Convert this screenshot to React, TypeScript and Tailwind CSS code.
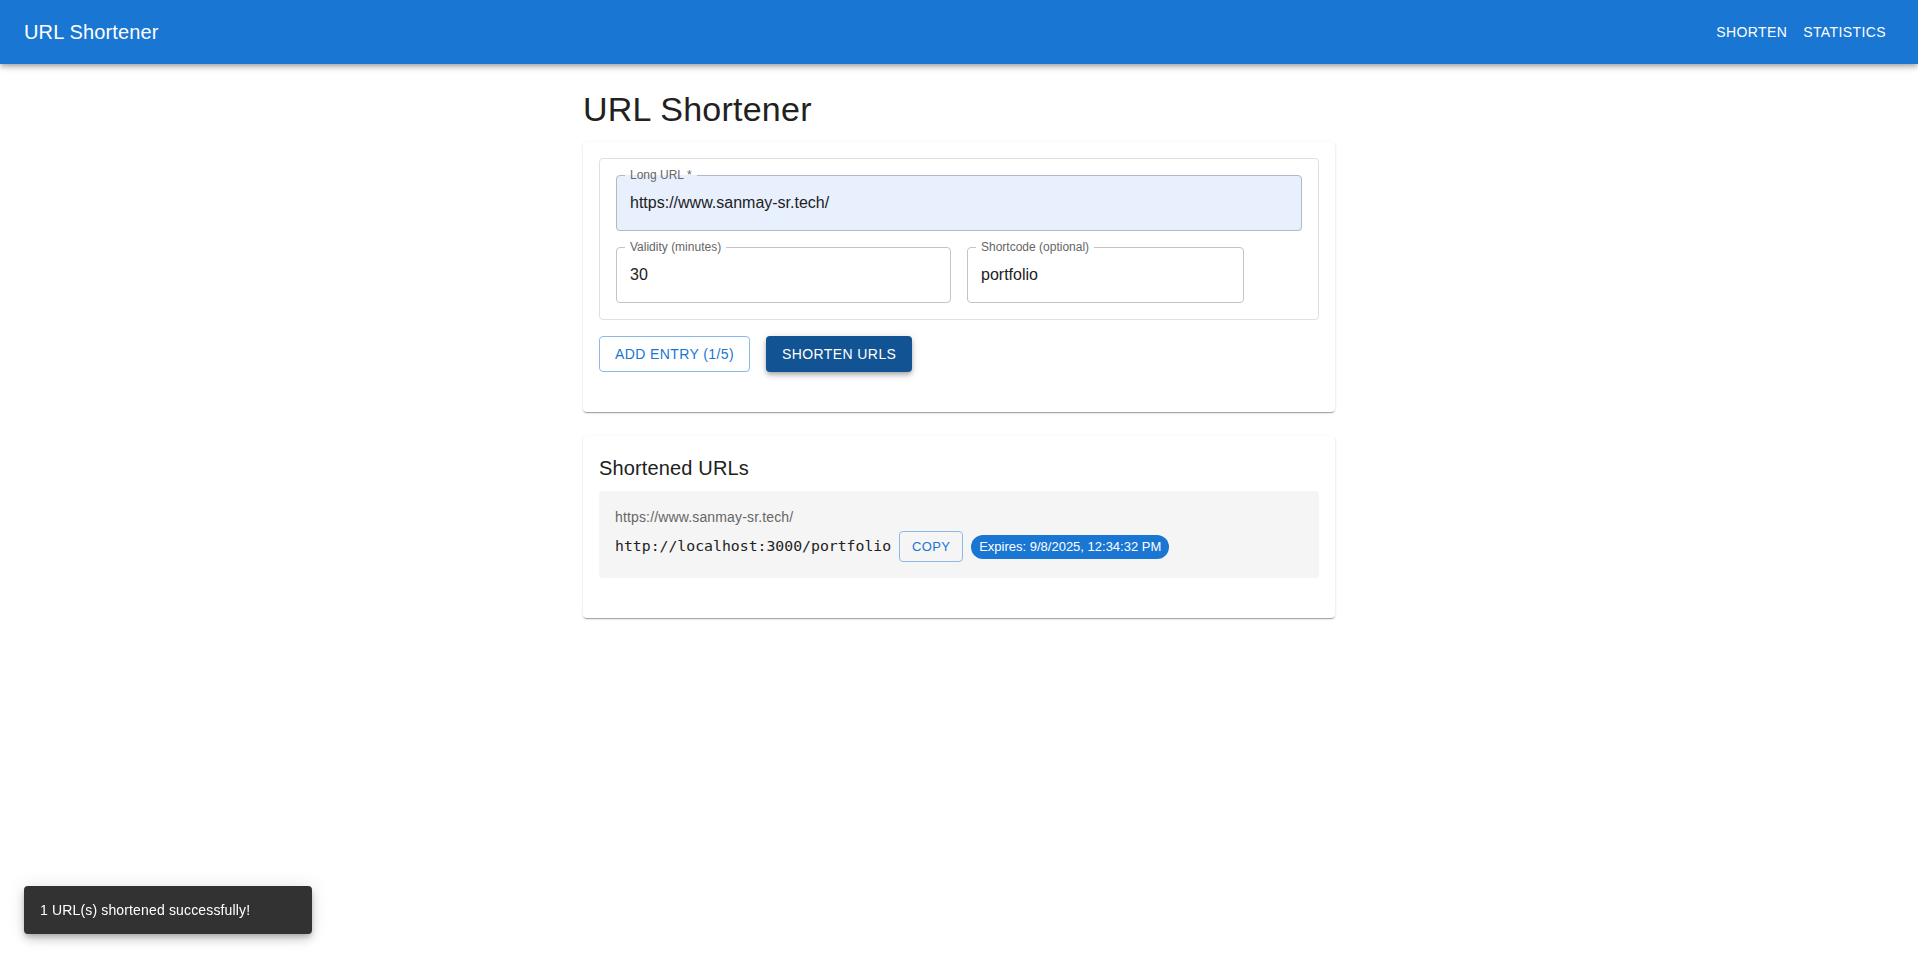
import React from 'react';

const paperShadow =
  'shadow-[0px_2px_1px_-1px_rgba(0,0,0,0.2),0px_1px_1px_0px_rgba(0,0,0,0.14),0px_1px_3px_0px_rgba(0,0,0,0.12)]';

const OutlinedField: React.FC<{ label: string; value: string; filled?: boolean }> = ({ label, value, filled }) => (
  <div className="relative h-14">
    <input
      readOnly
      value={value}
      className={`h-full w-full rounded px-[14px] text-base text-[#212121] outline-none ${filled ? 'bg-[#e8f0fe]' : 'bg-transparent'}`}
    />
    <fieldset
      aria-hidden
      className={`pointer-events-none absolute inset-x-0 -top-[5px] bottom-0 m-0 rounded border px-2 ${filled ? 'border-[#b3b9c4]' : 'border-[#c4c4c4]'}`}
    >
      <legend className="px-[5px] text-[12px] leading-[11px] text-[#666666]">{label}</legend>
    </fieldset>
  </div>
);

export default function App() {
  return (
    <div className="min-h-screen bg-white font-['Liberation_Sans',Arial,sans-serif] text-[#212121]">
      {/* app bar */}
      <header className="relative z-10 flex h-16 items-center justify-between bg-[#1976d2] pl-6 pr-6 text-white shadow-[0px_2px_4px_-1px_rgba(0,0,0,0.2),0px_4px_5px_0px_rgba(0,0,0,0.14),0px_1px_10px_0px_rgba(0,0,0,0.12)]">
        <div className="text-[20px] leading-8 tracking-[0.0075em]">URL Shortener</div>
        <nav className="flex">
          <button className="min-w-16 px-2 py-[6px] text-sm uppercase tracking-[0.02857em]">Shorten</button>
          <button className="min-w-16 px-2 py-[6px] text-sm uppercase tracking-[0.02857em]">Statistics</button>
        </nav>
      </header>

      <main className="mx-auto w-[752px] pt-6">
        <h1 className="mb-3 text-[34px] leading-[42px] tracking-[0.00735em]">URL Shortener</h1>

        {/* form card */}
        <section className={`rounded bg-white p-4 ${paperShadow}`}>
          <div className="flex flex-col gap-4 rounded border border-[#e0e0e0] p-4">
            <OutlinedField label="Long URL *" value="https://www.sanmay-sr.tech/" filled />
            <div className="grid grid-cols-12 gap-4">
              <div className="col-span-6">
                <OutlinedField label="Validity (minutes)" value="30" />
              </div>
              <div className="col-span-5">
                <OutlinedField label="Shortcode (optional)" value="portfolio" />
              </div>
            </div>
          </div>

          <div className="mb-6 mt-4 flex gap-4">
            <button className="h-9 rounded border border-[#8cbae8] px-[15px] text-sm uppercase tracking-[0.02857em] text-[#1976d2]">
              Add Entry (1/5)
            </button>
            <button className="h-9 rounded bg-[#125393] px-4 text-sm uppercase tracking-[0.02857em] text-white shadow-[0px_2px_4px_-1px_rgba(0,0,0,0.2),0px_4px_5px_0px_rgba(0,0,0,0.14),0px_1px_10px_0px_rgba(0,0,0,0.12)]">
              Shorten URLs
            </button>
          </div>
        </section>

        {/* results card */}
        <section className={`mt-6 rounded bg-white p-4 ${paperShadow}`}>
          <h2 className="mb-[7px] text-[20px] leading-8 tracking-[0.0075em]">Shortened URLs</h2>
          <div className="mb-6 rounded bg-[#f5f5f5] p-4">
            <p className="text-sm leading-5 tracking-[0.01071em] text-[#666666]">https://www.sanmay-sr.tech/</p>
            <div className="mt-1 flex items-center">
              <span className="font-['DejaVu_Sans_Mono',monospace] text-[14.8px] text-[#212121]">
                http://localhost:3000/portfolio
              </span>
              <button className="ml-2 h-[31px] min-w-16 rounded border border-[#8cbae8] px-[9px] text-[13px] uppercase tracking-[0.02857em] text-[#1976d2]">
                Copy
              </button>
              <span className="ml-2 flex h-6 items-center rounded-full bg-[#1976d2] px-2 text-[13px] text-white">
                Expires: 9/8/2025, 12:34:32 PM
              </span>
            </div>
          </div>
        </section>
      </main>

      {/* snackbar */}
      <div className="fixed bottom-6 left-6 flex h-12 w-[288px] items-center rounded bg-[#323232] px-4 text-sm tracking-[0.01071em] text-white shadow-[0px_3px_5px_-1px_rgba(0,0,0,0.2),0px_6px_10px_0px_rgba(0,0,0,0.14),0px_1px_18px_0px_rgba(0,0,0,0.12)]">
        1 URL(s) shortened successfully!
      </div>
    </div>
  );
}
